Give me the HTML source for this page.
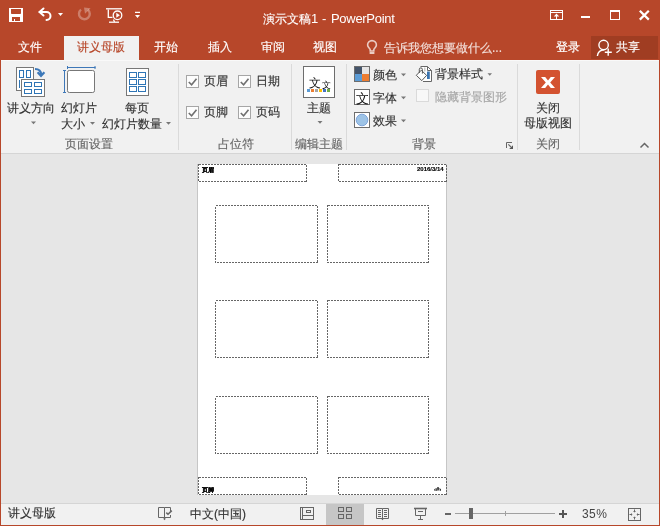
<!DOCTYPE html>
<html><head><meta charset="utf-8">
<style>
*{margin:0;padding:0;box-sizing:border-box}
html,body{width:660px;height:526px;overflow:hidden}
body{position:relative;background:#B7472A;font-family:"Liberation Sans",sans-serif;font-size:12px;line-height:16px;color:#333}
.a{will-change:transform;-webkit-text-stroke:0.15px}
.a{position:absolute;white-space:nowrap}
svg{position:absolute;overflow:visible;z-index:5}
.z{z-index:6}
.w{color:#fff}
#ribbon{position:absolute;left:1px;top:60px;width:658px;height:93px;background:#F1F1F1}
#rline{position:absolute;left:1px;top:153px;width:658px;height:1px;background:#D5D5D5}
#work{position:absolute;left:1px;top:154px;width:658px;height:349px;background:#E6E6E6;overflow:hidden}
#status{position:absolute;left:1px;top:503px;width:658px;height:22px;background:#F1F1F1;border-top:1px solid #D5D5D5}
.sep{position:absolute;top:64px;width:1px;height:86px;background:#DADADA}
.lbl{color:#666}
.dash{position:absolute;border:1px dashed #5a5a5a}
</style></head><body>

<!-- title bar -->
<div class="a w" style="left:263px;top:11px">演示文稿</div>
<div class="a w" style="left:311px;top:11px;font-size:13px;-webkit-text-stroke:0">1</div>
<div class="a w" style="left:322px;top:11px;font-size:13px;-webkit-text-stroke:0">-</div>
<div class="a w" style="left:331px;top:11px;font-size:13px;letter-spacing:-0.3px;-webkit-text-stroke:0">PowerPoint</div>

<!-- tabs -->
<div class="a" style="left:64px;top:36px;width:75px;height:24px;background:#F1F1F1"></div>
<div class="a w" style="left:18px;top:39px">文件</div>
<div class="a" style="left:77px;top:39px;color:#B7472A">讲义母版</div>
<div class="a w" style="left:154px;top:39px">开始</div>
<div class="a w" style="left:208px;top:39px">插入</div>
<div class="a w" style="left:261px;top:39px">审阅</div>
<div class="a w" style="left:313px;top:39px">视图</div>
<div class="a" style="left:384px;top:40px;color:rgba(255,255,255,.78)">告诉我您想要做什么...</div>
<div class="a w" style="left:556px;top:39px">登录</div>
<div class="a" style="left:591px;top:36px;width:67px;height:23px;background:#A03D22"></div>
<div class="a w" style="left:616px;top:39px">共享</div>

<div id="ribbon"></div>
<div id="rline"></div>
<div class="a" style="left:1px;top:60px;width:658px;height:1px;background:#F9F9F9"></div>
<div id="work"></div>
<div id="status"></div>

<!-- ribbon separators -->
<div class="sep" style="left:178px"></div>
<div class="sep" style="left:291px"></div>
<div class="sep" style="left:346px"></div>
<div class="sep" style="left:517px"></div>
<div class="sep" style="left:579px"></div>

<!-- group 1 -->
<div class="a" style="left:7px;top:100px">讲义方向</div>
<div class="a" style="left:61px;top:100px">幻灯片</div>
<div class="a" style="left:61px;top:116px">大小</div>
<div class="a" style="left:125px;top:100px">每页</div>
<div class="a" style="left:102px;top:116px">幻灯片数量</div>
<div class="a lbl" style="left:65px;top:136px">页面设置</div>

<!-- group 2 -->
<div class="a" style="left:204px;top:73px">页眉</div>
<div class="a" style="left:256px;top:73px">日期</div>
<div class="a" style="left:204px;top:104px">页脚</div>
<div class="a" style="left:256px;top:104px">页码</div>
<div class="a lbl" style="left:218px;top:136px">占位符</div>

<!-- group 3 -->
<div class="a" style="left:307px;top:100px">主题</div>
<div class="a lbl" style="left:295px;top:136px">编辑主题</div>

<!-- group 4 -->
<div class="a" style="left:373px;top:67px">颜色</div>
<div class="a" style="left:373px;top:90px">字体</div>
<div class="a" style="left:373px;top:113px">效果</div>
<div class="a" style="left:435px;top:66px">背景样式</div>
<div class="a" style="left:435px;top:89px;color:#A6A6A6">隐藏背景图形</div>
<div class="a lbl" style="left:412px;top:136px">背景</div>

<!-- group 5 -->
<div class="a" style="left:536px;top:100px">关闭</div>
<div class="a" style="left:524px;top:115px">母版视图</div>
<div class="a lbl" style="left:536px;top:136px">关闭</div>

<!-- slide -->
<div class="a" style="left:197px;top:164px;width:250px;height:331px;background:#fff;border-left:1px solid #C6C6C6;border-right:1px solid #C6C6C6"></div>


<svg width="660" height="526" style="left:0;top:0">
<!-- QAT save -->
<path fill="#fff" fill-rule="evenodd" d="M9 8h14v14H9z M11 9h10v4.2q0 .8-.8.8h-8.4q-.8 0-.8-.8z M12 17h8v4h-5v-2h-1v2h-2z"/>
<!-- undo -->
<g fill="none" stroke="#fff" stroke-width="2" stroke-linecap="round">
<path d="M39.5 12H46.5A4 4 0 0 1 46.5 20"/>
<path d="M43.5 8.5L39.5 12L43.5 15.5" stroke-linejoin="round"/>
</g>
<path fill="#fff" d="M58 13h5l-2.5 3z"/>
<!-- redo disabled -->
<g fill="none" stroke="rgba(255,255,255,.3)" stroke-width="2.4">
<path d="M81 9.6A5.4 5.4 0 1 0 88 9.8"/>
</g>
<path fill="rgba(255,255,255,.3)" d="M84 7.6L90.6 8.2L85 13.8z"/>
<!-- start from beginning -->
<g fill="none" stroke="#fff" stroke-width="1.3">
<path d="M106 8.8H122"/>
<path d="M108.3 9.5V17.3H112.5"/>
<circle cx="117.5" cy="15.3" r="4.3"/>
<path d="M109 22.2H119"/>
<path d="M113.5 19.5L114.5 22"/>
</g>
<path fill="#fff" d="M116.3 12.8v5l3.6-2.5z"/>
<!-- customize -->
<path fill="#fff" d="M135 11.8h5v1.2h-5z M135 15h5l-2.5 3z"/>
<!-- ribbon display options -->
<g fill="none" stroke="#fff" stroke-width="1">
<rect x="550.5" y="10.5" width="12" height="9"/>
<path d="M550.5 12.5H562.5"/>
<path d="M556.5 19V14.2"/>
</g>
<path fill="#fff" d="M556.5 13.5l-2.7 3h5.4z"/>
<!-- min -->
<rect x="581" y="16" width="9" height="2" fill="#fff"/>
<!-- max -->
<path fill="#fff" fill-rule="evenodd" d="M610 10h10v10h-10z M611 12h8v7h-8z"/>
<!-- close -->
<path d="M639.8 10.8L648.8 19.6M648.8 10.8L639.8 19.6" stroke="#fff" stroke-width="2.2"/>
<!-- bulb -->
<g fill="none" stroke="rgba(255,255,255,.72)" stroke-width="1.6">
<path d="M370.2 51V49.8C370.2 48.3 367.6 47.3 367.6 45A4.4 4.4 0 0 1 376.4 45C376.4 47.3 373.8 48.3 373.8 49.8V51Z"/>
</g>
<rect x="369.6" y="52" width="4.8" height="2" fill="rgba(255,255,255,.72)"/>
<!-- person plus -->
<g fill="none" stroke="#fff" stroke-width="1.4">
<circle cx="603.6" cy="45" r="4.7"/>
<path d="M597.4 56C597.8 52.2 600.5 50 604.3 49.8"/>
<path d="M604.8 52.3H611.8M608.2 48.6V55.8"/>
</g>

<!-- ===== Ribbon group 1 icons ===== -->
<!-- handout orientation -->
<rect x="16.5" y="67.5" width="17" height="23" fill="#fff" stroke="#777"/>
<g fill="none" stroke="#2E75B6" stroke-width="1">
<rect x="19.5" y="70.5" width="4" height="7"/>
<rect x="26.5" y="70.5" width="4" height="7"/>
<path d="M19.5 80V88"/>
</g>
<rect x="21.5" y="79.5" width="23" height="17" fill="#fff" stroke="#777"/>
<g fill="none" stroke="#2E75B6" stroke-width="1">
<rect x="24.5" y="82.5" width="7" height="4"/>
<rect x="34.5" y="82.5" width="7" height="4"/>
<rect x="24.5" y="89.5" width="7" height="4"/>
<rect x="34.5" y="89.5" width="7" height="4"/>
</g>
<path d="M35 69C38.8 69 41 70.2 41 74.5" fill="none" stroke="#3C78B9" stroke-width="2.2"/>
<path d="M37.6 72.3L41 75.8L44.4 72.3" fill="none" stroke="#3C78B9" stroke-width="2.2"/>
<!-- slide size -->
<rect x="67.5" y="70.5" width="27" height="22" rx="1.8" fill="#fff" stroke="#777"/>
<g stroke="#3F78B8" stroke-width="1" fill="none">
<path d="M67 67.5H95.5"/><path d="M67.5 66V69M95 66V69"/>
<path d="M64.5 70.5V92.5"/><path d="M63 70.5H66M63 92.5H66"/>
</g>
<!-- slides per page -->
<rect x="126.5" y="68.5" width="22" height="27" fill="#fff" stroke="#777"/>
<g fill="none" stroke="#2E75B6" stroke-width="1">
<rect x="129.5" y="72.5" width="7" height="5"/>
<rect x="138.5" y="72.5" width="7" height="5"/>
<rect x="129.5" y="79.5" width="7" height="5"/>
<rect x="138.5" y="79.5" width="7" height="5"/>
<rect x="129.5" y="86.5" width="7" height="5"/>
<rect x="138.5" y="86.5" width="7" height="5"/>
</g>
<!-- dropdown arrows -->
<g fill="#777">
<path d="M31 121.5h5l-2.5 2.7z"/>
<path d="M90 122h5l-2.5 2.7z"/>
<path d="M166 122h5l-2.5 2.7z"/>
<path d="M317.5 121h5l-2.5 2.7z"/>
<path d="M401 73.5h5l-2.5 2.7z"/>
<path d="M401 96.5h5l-2.5 2.7z"/>
<path d="M401 119.5h5l-2.5 2.7z"/>
<path d="M487.5 73.3h4.5l-2.25 2.5z"/>
</g>

<!-- ===== group 2: checkboxes ===== -->
<g fill="#FDFDFD" stroke="#A6A6A6">
<rect x="186.5" y="75.5" width="12" height="12"/>
<rect x="238.5" y="75.5" width="12" height="12"/>
<rect x="186.5" y="106.5" width="12" height="12"/>
<rect x="238.5" y="106.5" width="12" height="12"/>
</g>
<g fill="none" stroke="#707070" stroke-width="1.6">
<path d="M188.8 82L191.6 84.8L196.5 78.8"/>
<path d="M240.8 82L243.6 84.8L248.5 78.8"/>
<path d="M188.8 113L191.6 115.8L196.5 109.8"/>
<path d="M240.8 113L243.6 115.8L248.5 109.8"/>
</g>
<!-- disabled checkbox -->
<rect x="416.5" y="89.5" width="12" height="12" fill="#F8F8F8" stroke="#DADADA"/>

<!-- ===== group 3: themes ===== -->
<rect x="303.5" y="66.5" width="31" height="31" fill="#fff" stroke="#6D6D6D"/>
<g fill="#5B9BD5"><rect x="307" y="89" width="3" height="3"/></g>
<rect x="311" y="89" width="3" height="3" fill="#ED7D31"/>
<rect x="315" y="89" width="3" height="3" fill="#A5A5A5"/>
<rect x="319" y="89" width="3" height="3" fill="#FFC000"/>
<rect x="323" y="89" width="3" height="3" fill="#4472C4"/>
<rect x="327" y="89" width="3" height="3" fill="#70AD47"/>

<!-- ===== group 4 ===== -->
<rect x="354.5" y="66.5" width="15" height="15" fill="#fff" stroke="#6D6D6D"/>
<rect x="355" y="67" width="7" height="7" fill="#44546A"/>
<rect x="362" y="67" width="7" height="7" fill="#E7E6E6"/>
<rect x="355" y="74" width="7" height="7" fill="#5B9BD5"/>
<rect x="362" y="74" width="7" height="7" fill="#ED7D31"/>
<rect x="354.5" y="89.5" width="15" height="15" fill="#fff" stroke="#6D6D6D"/>
<rect x="354.5" y="112.5" width="15" height="15" fill="#fff" stroke="#6D6D6D"/>
<circle cx="362" cy="120" r="5.8" fill="#9DC3E6" stroke="#7FA6DA" stroke-width="1"/>
<!-- background styles -->
<path d="M420.5 66.5H427.5L431.5 70.5V81.5H423" fill="#fff" stroke="#666"/>
<path d="M427.5 66.5V70.5H431.5" fill="none" stroke="#666"/>
<rect x="424" y="67.5" width="1.5" height="4" fill="#C8C8C8"/>
<path d="M427 71.5h2.8v7.5h-2.8z" fill="#3A74B0"/>
<path d="M416.3 75.3L421.3 70.2L426.6 75.4L421.8 80.6Z" fill="#fff" stroke="#555"/>
<path d="M419.3 73V69.3Q419.3 67.9 420.8 67.9Q422.4 67.9 422.4 69.3V73.6" fill="none" stroke="#555"/>
<!-- dialog launcher -->
<path d="M506.5 148V142.5H512" fill="none" stroke="#666"/>
<path d="M508.3 144.3L511 147" fill="none" stroke="#666" stroke-width="1.2"/>
<path d="M513 145.2V149H509.2z" fill="#555"/>

<!-- ===== group 5 ===== -->
<rect x="536" y="70" width="24" height="24" rx="2" fill="#D35230"/>
<path fill="#fff" d="M541 77h4.2l2.8 3.6 2.8-3.6h4.2l-4.8 5.5 4.8 5.5h-4.2l-2.8-3.6-2.8 3.6h-4.2l4.8-5.5z"/>
<!-- collapse -->
<path d="M640.5 147.5L644.5 143.5L648.5 147.5" fill="none" stroke="#666" stroke-width="1.5"/>


<!-- reading view -->
<g fill="none" stroke="#666" stroke-width="1">
<path d="M382.5 508.5H376.5V518.5H382.5M382.5 508.5H388.5V518.5H382.5M382.5 508.5V519.5"/>
<path d="M378 510.5H381M378 512.5H381M378 514.5H381M378 516.5H381M384 510.5H387M384 512.5H387M384 514.5H387M384 516.5H387"/>
</g>
<path d="M381 518.5h3l-1.5 1.8z M163 518.5h3l-1.5 1.8z" fill="#666"/>
<!-- slideshow -->
<g fill="none" stroke="#666" stroke-width="1">
<path d="M414 508.5H427" stroke-width="1.6"/>
<path d="M415.5 509V515.5H425.5V509"/>
<path d="M418 511.5H423"/>
<path d="M420.5 516V519M418 519.5H423"/>
</g>
<!-- zoom -->
<rect x="445" y="513" width="6" height="2" fill="#666"/>
<rect x="455" y="513" width="100" height="1" fill="#A0A0A0"/>
<rect x="505" y="511" width="1" height="5" fill="#A0A0A0"/>
<rect x="469" y="508" width="4" height="11" fill="#666"/>
<path d="M559 513h8v2h-8z M562 510h2v8h-2z" fill="#555"/>
<!-- fit -->
<g fill="none" stroke="#666" stroke-width="1">
<rect x="628.5" y="508.5" width="12" height="12"/>
<path d="M634.5 509.5V512M634.5 517V519.5M629.5 514.5H632M637 514.5H639.5"/>
</g>
<path fill="#666" d="M633 511h3l-1.5 1.5z M633 518h3l-1.5-1.5z M631 513v3l1.5-1.5z M638 513v3l-1.5-1.5z"/>
<!-- ===== status bar icons ===== -->
<g fill="none" stroke="#666" stroke-width="1">
<path d="M164.5 507.5H158.5V517.5H164.5M164.5 507.5V519M164.5 517.5H170.5V515M164.5 507.5H170.5V511"/>
<path d="M166.3 512.6L168 514.2L171.8 510.6" stroke-width="1.5"/>
<rect x="300.5" y="507.5" width="13" height="12"/>
<path d="M302.5 507.5V519.5M302.5 515.5H313.5"/>
<rect x="306.5" y="510.5" width="4" height="2"/>
<rect x="338.5" y="507.5" width="5" height="4"/>
<rect x="346.5" y="507.5" width="5" height="4"/>
<rect x="338.5" y="514.5" width="5" height="4"/>
<rect x="346.5" y="514.5" width="5" height="4"/>
</g>
</svg>


<!-- theme glyphs -->
<div class="a z" style="left:309px;top:75px;font-size:12px;color:#111;font-family:'Liberation Serif',serif;-webkit-text-stroke:0">文</div>
<div class="a z" style="left:322px;top:79px;font-size:9px;line-height:12px;color:#111;font-family:'Liberation Serif',serif;-webkit-text-stroke:0">文</div>
<div class="a z" style="left:356px;top:91px;font-size:13px;color:#111;font-family:'Liberation Serif',serif;-webkit-text-stroke:0">文</div>

<!-- slide placeholders -->
<svg width="660" height="526" style="left:0;top:0;z-index:1">
<g fill="none" stroke="#666" stroke-dasharray="2 1" shape-rendering="crispEdges">
<rect x="198.5" y="164.5" width="108" height="17"/>
<rect x="338.5" y="164.5" width="108" height="17"/>
<rect x="198.5" y="477.5" width="108" height="17"/>
<rect x="338.5" y="477.5" width="108" height="17"/>
<rect x="215.5" y="205.5" width="102" height="57"/>
<rect x="327.5" y="205.5" width="101" height="57"/>
<rect x="215.5" y="300.5" width="102" height="57"/>
<rect x="327.5" y="300.5" width="101" height="57"/>
<rect x="215.5" y="396.5" width="102" height="57"/>
<rect x="327.5" y="396.5" width="101" height="57"/>
</g>
</svg>
<div class="a" style="left:202px;top:166px;font-size:6px;line-height:8px;font-weight:bold;color:#000">页眉</div>
<div class="a" style="left:417px;top:165px;font-size:6px;line-height:8px;font-weight:bold;color:#000">2016/3/14</div>
<div class="a" style="left:202px;top:486px;font-size:6px;line-height:8px;font-weight:bold;color:#000">页脚</div>
<div class="a" style="left:434px;top:485px;font-size:6px;line-height:8px;font-weight:bold;color:#000">‹#›</div>

<!-- status extra -->
<div class="a" style="left:326px;top:504px;width:38px;height:21px;background:#C6C6C6"></div>

<!-- status -->
<div class="a" style="left:8px;top:505px">讲义母版</div>
<div class="a" style="left:190px;top:506px">中文(中国)</div>
<div class="a" style="left:582px;top:506px;letter-spacing:.4px;color:#444;-webkit-text-stroke:0">35%</div>

</body></html>
